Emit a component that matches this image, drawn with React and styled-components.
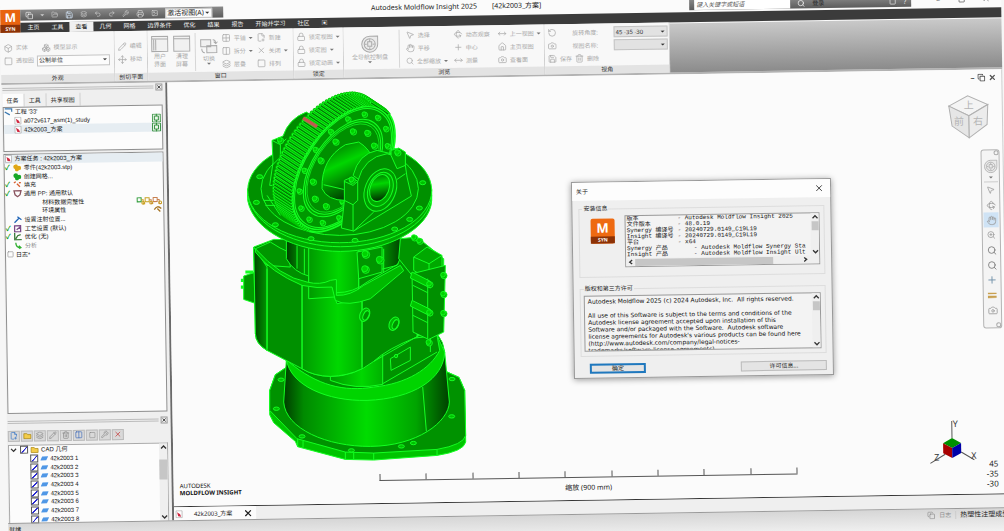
import React from "react";
import styled, { createGlobalStyle } from "styled-components";
import {
  Box,
  Boxes,
  Camera,
  Columns2,
  Copy,
  FilePlus2,
  FolderOpen,
  Grid2x2,
  Hand,
  House,
  Image,
  Layers,
  Lock,
  MousePointer2,
  Move,
  MoveHorizontal,
  Pencil,
  Plus,
  Printer,
  Redo2,
  RotateCcw,
  Rotate3d,
  Save,
  Search,
  Square,
  Trash2,
  Undo2,
  Wrench,
  X,
  ZoomIn,
} from "lucide-react";

const GlobalStyle = createGlobalStyle`
  * {
    box-sizing: border-box;
  }

  html,
  body {
    margin: 0;
    height: 100%;
    overflow: hidden;
    background: #f6f6f6;
  }

  button,
  input,
  select {
    font: inherit;
    color: inherit;
    margin: 0;
    padding: 0;
  }
`;

/* the whole window is tilted a little */
const Window = styled.div`
  display: flex;
  flex-direction: column;
  width: calc(100% - 3px);
  height: calc(100vh + 16px);
  background: #fbfbfb;
  color: #222;
  font-family: "Noto Sans", "Noto Sans CJK SC", sans-serif;
  font-size: 6px;
  line-height: 8px;
  transform: rotate(-0.9deg);
  transform-origin: 0 0;
`;

const Header = styled.header`
  display: flex;
  align-items: flex-end;
  flex: none;
  height: 33px;
`;

const AppButton = styled.button`
  display: flex;
  flex-direction: column;
  width: 20px;
  height: 23px;
  border: 0;
  background: #e8630f;
  color: #fff;
  font-size: 12px;
  font-weight: 700;
  line-height: 15px;
  text-align: center;
`;

const AppButtonLetter = styled.span`
  width: 100%;
`;

const AppButtonTag = styled.span`
  width: 100%;
  background: #8c3206;
  font-size: 5px;
  line-height: 8px;
`;

const HeaderRows = styled.div`
  flex: 1;
  min-width: 0;
`;

const TitleRow = styled.div`
  display: flex;
  align-items: flex-start;
  height: 13px;
`;

const Toolbar = styled.div`
  display: flex;
  align-items: center;
  gap: 7px;
  width: ${(props) => props.$width}px;
  height: 11px;
  padding: 0 5px;
  background: linear-gradient(#8a8a8a, #5c5c5c);
  color: #d5d5d5;
`;

const ToolButton = styled.button`
  display: flex;
  align-items: center;
  justify-content: center;
  border: 0;
  background: none;
  color: ${(props) => props.$color || "inherit"};
`;

const ViewSelect = styled.select`
  appearance: none;
  flex: 1;
  min-width: 0;
  height: 9px;
  padding: 0 1px;
  border: 0;
  background: none;
  color: #222;
`;

const Title = styled.h1`
  flex: 1;
  display: flex;
  justify-content: center;
  gap: 15px;
  margin: 0;
  font-size: 7px;
  font-weight: 400;
  line-height: 8px;
`;

const SearchInput = styled.input`
  width: 96px;
  height: 10px;
  border: 0;
  padding: 0 2px;
  background: #fff;
  font-style: italic;

  &::placeholder {
    color: #555;
  }
`;

const WindowButtons = styled.div`
  display: flex;
  justify-content: space-between;
  width: 90px;
  padding: 0 11px 0 25px;
  font-size: 8px;
`;

const TabRow = styled.nav`
  display: flex;
  align-items: center;
  height: 10px;
  padding-left: 1px;
  background: #3b3b3b;
`;

const RibbonTab = styled.button`
  height: 10px;
  padding: 0 6px;
  border: 0;
  background: ${(props) => (props.$active ? "#f0f0f0" : "none")};
  color: ${(props) => (props.$active ? "#222" : "#f4f4f4")};
  line-height: 9px;
  white-space: nowrap;
`;

const Ribbon = styled.section`
  display: flex;
  flex: none;
  height: 52px;
  border-bottom: 2px solid #b2b2b2;
`;

const Group = styled.div`
  display: flex;
  flex-direction: column;
  flex: none;
  width: ${(props) => props.$width}px;
  border-right: 1px solid #cfcfcf;
`;

const GroupBody = styled.div`
  display: flex;
  align-items: center;
  gap: ${(props) => props.$gap || 4}px;
  height: 42px;
  padding: 1px 3px 0;
  color: #aaa;
  background: #f8f8f8;
`;

const GroupTitle = styled.div`
  height: 8px;
  background: #e3e3e3;
  color: #333;
  line-height: 9px;
  text-align: center;
`;

const RibbonEmpty = styled.div`
  flex: 1;
  margin-top: 1px;
  background: linear-gradient(#c9c9c9, #8b8b8b);
`;

const Column = styled.div`
  display: flex;
  flex-direction: column;
  width: ${(props) => (props.$width ? `${props.$width}px` : "auto")};
`;

const Line = styled.div`
  display: flex;
  align-items: center;
  gap: 3px;
  height: 13px;
`;

const Command = styled.button`
  display: flex;
  align-items: center;
  gap: 3px;
  height: 13px;
  border: 0;
  background: none;
  white-space: nowrap;
`;

const BigCommand = styled.button`
  display: flex;
  flex-direction: column;
  align-items: center;
  width: ${(props) => props.$width || 18}px;
  border: 0;
  background: none;
  white-space: pre-line;
`;

const Separator = styled.span`
  width: 1px;
  height: 38px;
  background: #d6d6d6;
`;

const Arrow = styled.span`
  width: 0;
  height: 0;
  border: 2px solid transparent;
  border-top-color: ${(props) => props.$color || "#777"};
  border-bottom: 0;
`;

const SelectBox = styled.span`
  display: flex;
  align-items: center;
  width: ${(props) => props.$width}px;
  height: ${(props) => props.$height || 11}px;
  padding-right: 2px;
  border: 1px solid #c4c4c4;
  background: ${(props) => props.$background || "#fcfcfc"};
  font-size: ${(props) => props.$size || 6}px;
`;

const PlainSelect = styled.select`
  appearance: none;
  flex: 1;
  min-width: 0;
  height: 9px;
  padding: 0 1px;
  border: 0;
  background: none;
  color: #333;
`;

const FieldLabel = styled.label`
  width: 51px;
  text-align: center;
`;

const Main = styled.main`
  display: flex;
  flex: 1;
  min-height: 0;
`;

const Dock = styled.aside`
  display: flex;
  flex-direction: column;
  flex: none;
  width: 166px;
  padding: 0 3px 0 1px;
  border-right: 2px solid #6a6a6a;
  background: #efefef;
`;

const Gripper = styled.div`
  display: flex;
  align-items: center;
  gap: 2px;
  flex: none;
  height: 9px;
`;

const GripperBar = styled.span`
  flex: 1;
  height: 3px;
  border-top: 1px solid #bcbcbc;
  border-bottom: 1px solid #bcbcbc;
`;

const CloseButton = styled.button`
  display: flex;
  border: 1px solid #999;
  background: #eee;
`;

const DockTabs = styled.div`
  display: flex;
  flex: none;
  height: 13px;
`;

const DockTab = styled.button`
  padding: 0 5px 0 4px;
  border: 0;
  border-right: 1px solid #d0d0d0;
  background: ${(props) => (props.$active ? "#fcfcfc" : "none")};
`;

const TreeBox = styled.div`
  flex: none;
  height: 45px;
  margin-bottom: 2px;
  border: 1px solid #8e8e8e;
  background: #fcfcfc;
`;

const TaskBox = styled.div`
  flex: 1;
  margin-bottom: 4px;
  border: 1px solid #8e8e8e;
  background: #fcfcfc;
`;

const TreeList = styled.ul`
  display: grid;
  grid-auto-rows: 1fr;
  height: ${(props) => props.$height}px;
  margin: 0;
  padding: 0;
  list-style: none;
  font-family: "Liberation Sans", "Noto Sans CJK SC", sans-serif;
  color: #111;
`;

const TreeRow = styled.li`
  display: flex;
  align-items: center;
  gap: 2px;
  padding: 0 1px 0 ${(props) => props.$indent || 0}px;
  background: ${(props) => (props.$selected ? "#e6edf2" : "none")};
  color: ${(props) => (props.$muted ? "#888" : "inherit")};
  white-space: pre;
`;

const Tick = styled.span`
  width: 6px;
  color: #0a9a1a;
  font-size: 7px;
  font-weight: 700;
`;

const Spacer = styled.span`
  flex: 1;
`;

const LayerTools = styled.div`
  display: flex;
  align-items: center;
  gap: 1px;
  flex: none;
  height: 18px;
`;

const LayerTool = styled.button`
  display: flex;
  align-items: center;
  justify-content: center;
  width: 12px;
  height: 11px;
  border: 1px solid #bbb;
  background: #d9d9d9;
  color: ${(props) => props.$color || "#888"};
`;

const LayerBox = styled.div`
  display: flex;
  flex: none;
  height: 78px;
  border: 1px solid #aaa;
  border-bottom: 0;
  background: #fcfcfc;
`;

const LayerList = styled(TreeList)`
  flex: 1;
`;

const Check = styled.input`
  appearance: none;
  flex: none;
  width: 8px;
  height: 8px;
  border: 1px solid #555;
  background: #fff;

  &:checked {
    background: linear-gradient(135deg, #fff 44%, #2a2ad0 45%, #2a2ad0 60%, #fff 61%);
  }
`;

const LayerLabel = styled.label`
  display: flex;
  align-items: center;
  gap: 2px;
`;

const Scroll = styled.div`
  display: flex;
  flex-direction: ${(props) => (props.$horizontal ? "row" : "column")};
  align-items: center;
  flex: none;
  width: ${(props) => (props.$horizontal ? "auto" : "8px")};
  height: ${(props) => (props.$horizontal ? "8px" : "auto")};
  background: #efefef;
`;

const Thumb = styled.span`
  width: ${(props) => props.$width}px;
  height: ${(props) => props.$height}px;
  background: #c6c6c6;
`;

const Work = styled.div`
  display: flex;
  flex-direction: column;
  flex: 1;
  min-width: 0;
`;

const Viewport = styled.div`
  position: relative;
  flex: 1;
  background: #fbfbfb;
  border-right: 1px solid #ccc;
`;

const ModelPlace = styled.div`
  position: absolute;
  left: 63px;
  top: 4px;
`;

const MdiButtons = styled.div`
  position: absolute;
  right: 5px;
  top: 4px;
  display: flex;
  gap: 3px;
  color: #555;
  font-size: 8px;
  font-weight: 700;
`;

const CubePlace = styled.div`
  position: absolute;
  right: 12px;
  top: 25px;
`;

const NavBar = styled.div`
  position: absolute;
  right: 3px;
  top: 80px;
  display: flex;
  flex-direction: column;
  align-items: center;
  width: 19px;
  height: 179px;
  border: 1px solid #b4b4b4;
  border-radius: 3px;
  background: #f4f4f4;
  color: #999;
`;

const NavDot = styled.span`
  align-self: flex-end;
  width: 5px;
  height: 5px;
  border: 1px solid #aaa;
  border-radius: 50%;
`;

const NavWheel = styled.button`
  display: flex;
  flex-direction: column;
  align-items: center;
  gap: 3px;
  height: 27px;
  padding-top: 4px;
  border: 0;
  border-bottom: 1px solid #ccc;
  background: none;
`;

const NavButton = styled.button`
  display: flex;
  align-items: center;
  justify-content: center;
  width: 15px;
  height: 15px;
  border: 0;
  background: ${(props) => (props.$active ? "#cfe3f5" : "none")};
  color: ${(props) => props.$color || "#999"};
`;

const Brand = styled.div`
  position: absolute;
  left: 6px;
  bottom: 9px;
  color: #111;
  line-height: 7px;
`;

const BrandName = styled.div`
  font-weight: 700;
`;

const RulerPlace = styled.div`
  position: absolute;
  left: 206px;
  bottom: 8px;
  width: 418px;
  font-size: 7px;
  line-height: 9px;
  text-align: center;
`;

const RulerBar = styled.div`
  display: flex;
  height: 7px;
  margin-bottom: 5px;
  border-bottom: 1px solid #555;
  border-left: 1px solid #555;
`;

const RulerStep = styled.span`
  flex: 1;
  border-right: 1px solid #555;
`;

const AxesPlace = styled.div`
  position: absolute;
  right: 27px;
  bottom: 28px;
`;

const Angles = styled.div`
  position: absolute;
  right: 9px;
  bottom: 5px;
  font-size: 8px;
  line-height: 10px;
  text-align: right;
`;

const DocTabs = styled.div`
  display: flex;
  flex: none;
  height: 14px;
  border-top: 1px solid #333;
  background: #efefef;
`;

const DocTab = styled.button`
  display: flex;
  align-items: center;
  justify-content: space-between;
  width: 82px;
  border: 0;
  padding: 0 3px 0 1px;
  background: #fcfcfc;
  white-space: nowrap;
`;

const StatusBar = styled.footer`
  display: flex;
  align-items: flex-start;
  justify-content: space-between;
  flex: none;
  height: 24px;
  padding: 2px 0 0 1px;
  border-top: 1px solid #999;
  background: linear-gradient(#d6d6d6, #f2f2f2);
`;

const StatusRight = styled.div`
  display: flex;
  align-items: center;
  gap: 4px;
  color: #888;
  white-space: nowrap;
`;

const StatusMode = styled.span`
  padding-left: 4px;
  border-left: 1px solid #ccc;
  color: #222;
  font-size: 7px;
`;

const Dialog = styled.div`
  position: absolute;
  left: 402px;
  top: 106px;
  width: 260px;
  border: 1px solid #999;
  background: #efefef;
  box-shadow: 0 1px 6px rgba(0, 0, 0, 0.4);
`;

const DialogBar = styled.div`
  display: flex;
  align-items: center;
  justify-content: space-between;
  height: 18px;
  padding: 0 6px 0 4px;
  background: #fdfdfd;
`;

const DialogTitle = styled.h2`
  margin: 0;
  font-size: 6px;
  font-weight: 400;
`;

const DialogBody = styled.div`
  display: flex;
  flex-direction: column;
  gap: 7px;
  padding: 4px 6px 4px;
`;

const Fieldset = styled.fieldset`
  display: flex;
  gap: 10px;
  min-width: 0;
  height: ${(props) => props.$height}px;
  margin: 0;
  padding: 3px 4px 0 3px;
  border: 1px solid #ddd;
`;

const Legend = styled.legend`
  padding: 0 1px;
  line-height: 8px;
`;

const ProductLogo = styled.div`
  width: 24px;
  height: 25px;
  margin: 3px 0 0 8px;
  border-radius: 2px;
  background: #ee6a12;
  color: #fff;
  font-size: 13px;
  font-weight: 700;
  line-height: 18px;
  text-align: center;
`;

const ProductTag = styled.div`
  background: #8c3206;
  font-size: 5px;
  line-height: 7px;
`;

const InfoBox = styled.div`
  display: flex;
  flex-direction: column;
  flex: 1;
  min-width: 0;
  height: ${(props) => props.$height}px;
  border: 1px solid #999;
  background: #f3f3f3;
`;

const InfoTop = styled.div`
  display: flex;
  flex: 1;
  min-height: 0;
`;

const VersionRows = styled.dl`
  flex: 1;
  min-width: 0;
  margin: 0;
  overflow: hidden;
  font-family: "Liberation Mono", "Noto Sans CJK SC", monospace;
  line-height: 6px;
  color: #111;
`;

const VersionRow = styled.div`
  display: flex;
  height: 6px;
  white-space: nowrap;
`;

const VersionName = styled.dt`
  flex: none;
  width: ${(props) => (props.$wide ? 68 : 52)}px;
  padding-left: 1px;
`;

const VersionValue = styled.dd`
  margin: 0;
`;

const LicenseText = styled.div`
  flex: 1;
  min-width: 0;
  overflow: hidden;
  padding: 1px 3px;
  color: #111;
  font-family: "DejaVu Sans", sans-serif;
  line-height: 7px;
  white-space: pre;
`;

const DialogButtons = styled.div`
  display: flex;
  align-items: center;
  justify-content: space-between;
  padding: 0 0 0 9px;
`;

const DialogButton = styled.button`
  width: ${(props) => props.$width}px;
  height: 10px;
  border: ${(props) => (props.$primary ? "2px solid #1f78be" : "1px solid #bbb")};
  background: #e4e4e4;
  line-height: 6px;
`;

const edge = "#14ff22";

// gear in front view: one ellipse, swept back to the upper left
const gear = { cx: 338, cy: 248, a: 214, b: 118, tilt: (-56 * Math.PI) / 180 };
const sweep = { x: -52, y: -34 };

function gearPoint(t, k = 1) {
  const px = gear.a * k * Math.cos(t);
  const py = gear.b * k * Math.sin(t);
  return [
    gear.cx + px * Math.cos(gear.tilt) - py * Math.sin(gear.tilt),
    gear.cy + px * Math.sin(gear.tilt) + py * Math.cos(gear.tilt),
  ];
}

const teeth = Array.from({ length: 60 }, (_, i) => gearPoint(Math.PI * 0.96 + (i / 59) * Math.PI * 1.1));
const rimBolts = Array.from({ length: 16 }, (_, i) => gearPoint((i / 16) * Math.PI * 2, 0.86));
const hubBolts = Array.from({ length: 11 }, (_, i) => gearPoint((i / 11) * Math.PI * 2, 0.6));

function GearRing({ k, fill = "none", width = 3 }) {
  return (
    <ellipse
      cx={gear.cx}
      cy={gear.cy}
      rx={gear.a * k}
      ry={gear.b * k}
      fill={fill}
      stroke={edge}
      strokeWidth={width}
      transform={`rotate(-56 ${gear.cx} ${gear.cy})`}
    />
  );
}

function Bolt({ x, y, r = 8 }) {
  return (
    <g stroke={edge} strokeWidth="2.5">
      <circle cx={x + 3} cy={y + 3} r={r} fill="#00b400" />
      <circle cx={x} cy={y} r={r - 2} fill="#00d200" />
    </g>
  );
}

function Model() {
  return (
    <svg width="250" height="390" viewBox="0 0 750 1170" overflow="visible" role="img" aria-label="42k2003">
      <defs>
        <linearGradient id="cone">
          <stop offset="0" stopColor="#003c00" />
          <stop offset="0.12" stopColor="#008a00" />
          <stop offset="0.5" stopColor="#00dc00" />
          <stop offset="0.8" stopColor="#00a400" />
          <stop offset="1" stopColor="#004000" />
        </linearGradient>
        <linearGradient id="mid">
          <stop offset="0" stopColor="#009a00" />
          <stop offset="0.6" stopColor="#00d800" />
          <stop offset="1" stopColor="#00b000" />
        </linearGradient>
        <linearGradient id="side">
          <stop offset="0" stopColor="#004400" />
          <stop offset="1" stopColor="#009400" />
        </linearGradient>
        <linearGradient id="hub" x1="0" y1="0" x2="0.4" y2="1">
          <stop offset="0" stopColor="#006000" />
          <stop offset="0.45" stopColor="#00d600" />
          <stop offset="1" stopColor="#003a00" />
        </linearGradient>
      </defs>
      <g transform="rotate(0.9)" strokeLinejoin="round" stroke={edge} strokeWidth="3">
        {/* base plate */}
        <path d="M165 848 L135 868 L118 915 L118 988 L130 1012 L195 1068 L202 1084 L345 1122 L430 1124 L620 1110 Q700 1098 706 1070 L703 915 L686 876 L640 855Z" fill="#00c400" />
        <path d="M165 848 L135 868 L118 915 L118 975 L200 1060 L345 1100 L430 1103 L620 1092 Q700 1078 706 1050 L703 915 L686 876 L640 855Z" fill="#009200" />
        <path d="M345 1100 V1122 M430 1103 V1124 M202 1060 V1084 M370 1102 V1123 M620 1092 V1110 M218 1066 V1086" fill="none" />
        {[[152, 883], [138, 970], [215, 1053], [363, 1095], [513, 1083], [549, 1073], [664, 993], [665, 881]].map(([x, y]) => (
          <ellipse key={`${x}-${y}`} cx={x} cy={y} rx="9" ry="5" fill="#00c000" />
        ))}
        {/* cone */}
        <path d="M168 822 L160 950 C165 1030 290 1084 420 1083 C560 1082 655 1010 657 950 L643 800 Q640 770 620 745 L180 780Z" fill="url(#cone)" />
        <path d="M168 822 C180 900 290 948 410 945 C550 940 640 880 643 800 L620 750 L200 800Z" fill="#00d400" />
        <path d="M176 830 C260 900 340 920 430 905 C530 895 600 850 628 795 L620 750 L200 800Z" fill="#009200" />
        <path d="M300 830 V885 Q375 915 457 897 V800Z" fill="url(#mid)" />
        <path d="M480 820 L540 785 V825 L482 855Z" fill="#009200" />
        <circle cx="497" cy="812" r="5" fill="#00c000" />
        <path d="M577 905 L588 1038 M600 740 V800 M457 895 L620 800" fill="none" />
        {/* left stub */}
        <path d="M75 560 L40 572 V642 L78 655Z" fill="#009a00" />
        <path d="M45 560 h24 M36 580 v10 M36 600 v10" fill="none" strokeWidth="9" />
        {/* housing */}
        <path d="M70 485 L130 462 L560 470 L560 755 Q470 790 430 828 Q370 874 300 873 Q250 872 215 850 L110 795 Q76 775 75 745Z" fill="#009000" />
        <path d="M70 485 L75 745 Q76 775 110 795 V545Z" fill="url(#side)" />
        <path d="M215 595 V850 Q250 872 300 873 Q350 872 395 850 V640 L320 655 L300 600Z" fill="url(#mid)" />
        <path d="M110 790 V550 M215 850 V590 M395 846 V640 M430 828 L575 745" fill="none" />
        <path d="M120 470 Q150 490 175 500 L180 545 L110 540 L75 490Z" fill="#009600" />
        {/* neck */}
        <path d="M168 455 V520 Q190 560 235 572 V590 Q260 600 300 590 L500 540 Q520 510 510 440Z" fill="url(#cone)" />
        <path d="M235 480 V640 L385 630 V480Z" fill="url(#mid)" />
        <path d="M200 480 V550 M222 490 V565 M385 490 V630 M460 490 V560" fill="none" />
        <path d="M380 500 L455 485 V560 L385 580Z" fill="#009600" />
        {/* folded lip */}
        <path d="M75 490 Q150 575 230 590 Q270 600 300 585 L318 582 V630 Q360 632 400 600 L510 540 L520 556 L420 640 Q350 665 315 645 L305 605 Q260 610 215 600 Q120 560 75 500Z" fill="#00b800" />
        <path d="M318 622 Q370 622 410 590 L505 535" fill="none" />
        {[[404, 505], [447, 522], [403, 550]].map(([x, y]) => (
          <Bolt key={`${x}-${y}`} x={x} y={y} r={11} />
        ))}
        <ellipse cx="403" cy="688" rx="14" ry="21" fill="#00b400" transform="rotate(25 403 688)" />
        <ellipse cx="407" cy="690" rx="8" ry="15" fill="#009200" transform="rotate(25 407 690)" />
        <ellipse cx="491" cy="715" rx="14" ry="21" fill="#00b400" transform="rotate(25 491 715)" />
        <ellipse cx="495" cy="717" rx="8" ry="15" fill="#009200" transform="rotate(25 495 717)" />
        {/* right bracket */}
        <path d="M510 460 L560 455 L640 520 V590 L545 570 L505 520Z" fill="#009600" />
        <path d="M550 515 L590 485 L635 510 V560 L590 580 L550 555Z" fill="#00a800" />
        <path d="M550 515 L596 535 L635 510 M596 535 V580" fill="none" />
        <path d="M545 565 L645 540 L640 740 L595 762 L548 740Z" fill="#009000" />
        <path d="M592 580 V760 M548 600 L592 622 M548 690 L592 712" fill="none" />
        <path d="M545 560 L600 588 V608 L540 578Z M545 645 L600 672 V692 L540 662Z" fill="#00c400" />
        {[[596, 595], [596, 680], [638, 568], [638, 625], [638, 682], [594, 770], [550, 455], [566, 465]].map(([x, y]) => (
          <Bolt key={`${x}-${y}`} x={x} y={y} r={9} />
        ))}
        {/* flange */}
        <path d="M52 310 V345 C70 440 200 498 330 498 C470 498 600 430 604 345 V310Z" fill="#00a800" />
        <path d="M52 330 C70 425 200 484 330 484 C470 484 600 420 604 330" fill="none" />
        <ellipse cx="328" cy="315" rx="276" ry="157" fill="#009000" />
        <ellipse cx="328" cy="310" rx="236" ry="140" fill="#009600" />
        {[[88, 274], [78, 351], [135, 418], [242, 460], [374, 465], [493, 431], [567, 368], [577, 292], [538, 402]].map(([x, y]) => (
          <ellipse key={`${x}-${y}`} cx={x} cy={y} rx="9" ry="6" fill="#00c000" />
        ))}
        {/* rear bearing */}
        <path d="M125 165 L158 152 Q175 100 228 80 L260 100 L250 300 L118 300 L128 230Z" fill="#008c00" />
        <path d="M125 165 L150 178 L168 160 M150 178 V215 L125 240 M110 330 L150 390 M100 345 h40 M105 360 h40" fill="none" />
        <Bolt x={148} y={163} r={9} />
        {/* gear */}
        <g transform={`translate(${sweep.x} ${sweep.y})`}>
          <GearRing k={1} fill="#00c000" />
        </g>
        <GearRing k={1.01} fill="#00b400" width={5} />
        {teeth.map(([x, y], i) => (
          <g key={i}>
            <line x1={x} y1={y} x2={x + sweep.x} y2={y + sweep.y} stroke="#00c400" strokeWidth="13" strokeLinecap="round" />
            <line x1={x} y1={y} x2={x + sweep.x} y2={y + sweep.y} strokeWidth="8" strokeLinecap="round" />
            <line x1={x} y1={y} x2={x + sweep.x} y2={y + sweep.y} stroke="#007c00" strokeWidth="4" />
          </g>
        ))}
        <path d="M218 98 L260 124" stroke="#c05a50" strokeWidth="11" />
        <GearRing k={0.97} fill="#009800" width={4} />
        <GearRing k={0.94} />
        {rimBolts.map(([x, y], i) => (
          <Bolt key={i} x={x} y={y} />
        ))}
        <GearRing k={0.77} fill="#00a600" />
        <GearRing k={0.73} fill="#009000" />
        <GearRing k={0.7} width={2} />
        {hubBolts.map(([x, y], i) => (
          <Bolt key={i} x={x} y={y} r={9} />
        ))}
        {/* hub */}
        <path d="M275 310 Q272 220 345 178 L385 170 Q420 190 430 230 L345 345 Q290 345 275 310Z" fill="url(#hub)" />
        <path d="M280 298 L340 312" fill="none" />
        {/* front bearing block */}
        <path d="M368 270 Q385 205 440 195 L482 205 L525 215 V260 L450 330Z" fill="#00a000" />
        <path d="M342 285 L365 275 L382 288 Q400 215 470 205 Q515 215 525 240 L530 275 L543 332 L370 437 L333 428 L342 345Z" fill="#009000" />
        <path d="M342 345 L368 358 L382 345 V288 M368 358 V437 M342 288 L368 300 L382 288 M525 265 L500 282 M370 437 L430 380" fill="none" />
        <path d="M482 195 L505 188 L525 200 V240 L500 250 L482 210Z" fill="#00a400" />
        <ellipse cx="450" cy="314" rx="46" ry="66" fill="#009a00" transform="rotate(22 450 314)" />
        <ellipse cx="450" cy="312" rx="36" ry="53" fill="#00a800" transform="rotate(22 450 312)" />
        <ellipse cx="448" cy="308" rx="28" ry="42" fill="url(#hub)" transform="rotate(22 448 308)" />
        <Bolt x={363} y={282} r={9} />
        <Bolt x={500} y={200} r={9} />
      </g>
    </svg>
  );
}

function ViewCube() {
  return (
    <svg width="42" height="44" viewBox="0 0 42 44" stroke="#b0b0b0" fontSize="10" fill="#eee">
      <path d="M1 11 L20 1 L40 10 L21 21Z" fill="#f4f4f4" />
      <path d="M1 11 L21 21 V43 L4 31Z" fill="#e6e6e6" />
      <path d="M40 10 L21 21 V43 L39 30Z" fill="#ececec" />
      <g stroke="none" fill="#b4b4b4">
        <text x="6" y="30">前</text>
        <text x="25" y="30">右</text>
        <text x="16" y="14">上</text>
      </g>
    </svg>
  );
}

function Axes() {
  return (
    <svg width="52" height="46" viewBox="0 0 52 46" stroke="#555" fontSize="9">
      <path d="M24 20 V3 M17 36 L2 45 M33 34 L46 42" fill="none" />
      <g stroke="none">
        <path d="M15 25 L24 20 L33 25 L24 30Z" fill="#009000" />
        <path d="M15 25 L24 30 V40 L15 35Z" fill="#a80000" />
        <path d="M24 30 L33 25 V35 L24 40Z" fill="#0000a8" />
        <g fill="#333">
          <text x="25" y="9">Y</text>
          <text x="6" y="42">Z</text>
          <text x="43" y="41">X</text>
        </g>
      </g>
    </svg>
  );
}

function WheelIcon({ size }) {
  return (
    <svg width={size} height={size} viewBox="0 0 18 18" fill="#eaeaea" stroke="#aaa">
      <path d="M9 1 H17 V9 A8 8 0 1 1 9 1Z" />
      <circle cx="9" cy="9" r="5.5" fill="none" />
      <path d="M7 6.5 H11 V11 H7Z M9 4 V6 M9 12 V14 M4 9 H6 M12 9 H14" fill="none" />
    </svg>
  );
}

function WindowIcon({ sidebar }) {
  return (
    <svg width="18" height="17" viewBox="0 0 18 17" fill="#f1f1f1" stroke="#aaa">
      <path d="M1 1 H17 V16 H1Z M1 3.5 H17" />
      {sidebar && <path d="M3 4 V15 M5 4 V15" />}
    </svg>
  );
}

function SwitchIcon() {
  return (
    <svg width="18" height="17" viewBox="0 0 18 17" fill="#f1f1f1" stroke="#aaa">
      <path d="M1 2 H11 V9 H1Z M7 8 H17 V15 H7Z" />
      <path d="M13 2 Q16 2 16 6 M14 4 L16 6 L18 4 M2 11 Q2 15 5 15" fill="none" />
    </svg>
  );
}

function StudyIcon() {
  return (
    <svg width="8" height="8" viewBox="0 0 8 8">
      <path d="M1 0.5 H7 V7.5 H1Z" fill="#fff" stroke="#999" strokeWidth="0.6" />
      <path d="M2 2 L5 4 L6 6.5 L3 6Z" fill="#d02840" />
    </svg>
  );
}

function FolderIcon() {
  return (
    <svg width="9" height="8" viewBox="0 0 9 8">
      <path d="M1 2 H4 L5 3 H8 V7 H1Z" fill="#f3cc4a" stroke="#a88410" strokeWidth="0.7" />
    </svg>
  );
}

function BlobIcon({ color }) {
  return (
    <svg width="9" height="8" viewBox="0 0 9 8" fill={color}>
      <circle cx="3" cy="3" r="2.4" />
      <circle cx="6.3" cy="4.2" r="2.2" />
      <circle cx="4.2" cy="5.8" r="2" />
    </svg>
  );
}

function LineIcon({ color, d }) {
  return (
    <svg width="9" height="8" viewBox="0 0 9 8" fill="none" stroke={color} strokeWidth="1.3">
      <path d={d} />
    </svg>
  );
}

function MeshBadge() {
  return (
    <svg width="9" height="9" viewBox="0 0 9 9" fill="#e9f5e9" stroke="#2a8a35" strokeWidth="0.9">
      <path d="M0.5 0.5 H8.5 V8.5 H0.5Z M2.5 2.5 H6.5 V6.5 H2.5Z M4.5 0 V2.5 M4.5 6.5 V9" />
    </svg>
  );
}

function ChainIcon() {
  return (
    <svg width="26" height="8" viewBox="0 0 26 8" fill="none" strokeWidth="1">
      <path d="M1 1 H5 V5 H1Z" stroke="#2a9a35" />
      <path d="M9 1 H13 V5 H9Z M5 3 H7 V7 H9" stroke="#c8a020" />
      <path d="M17 1 H21 V5 H17Z M13 3 H15 V7 H17 M21 3 H23 V7 H25" stroke="#c88050" />
      <circle cx="7" cy="6" r="1.4" stroke="#c8a020" />
      <circle cx="15" cy="6" r="1.4" stroke="#c8a020" />
      <circle cx="24" cy="6" r="1.4" stroke="#c8a020" />
    </svg>
  );
}

function LayerIcon() {
  return (
    <svg width="8" height="6" viewBox="0 0 8 6">
      <path d="M2 1 H8 L6 5 H0Z" fill="#4f97e6" />
    </svg>
  );
}

const ribbonTabs = ["主页", "工具", "查看", "几何", "网格", "边界条件", "优化", "结果", "报告", "开始并学习", "社区"];

const tasks = [
  { label: "零件(42k2003.stp)", tick: true, icon: <BlobIcon color="#e0a818" /> },
  { label: "创建网格...", icon: <BlobIcon color="#18a828" /> },
  { label: "填充", tick: true, icon: <LineIcon color="#d86030" d="M1 2 L3 1 M4 3 L7 6 M6 2 H8" /> },
  { label: "通用 PP: 通用默认", tick: true, icon: <LineIcon color="#8a5560" d="M1 1 H8 L7 5 L4.5 7 L2 5Z" /> },
  { label: "材料数据完整性", indent: 37, badge: <ChainIcon /> },
  { label: "环境属性", indent: 37, badge: <LineIcon color="#a8782a" d="M1 5 Q4 0 8 4 M4 4 L7 7" /> },
  { label: "设置注射位置...", icon: <LineIcon color="#2468b8" d="M1 7 L6 2 M4 1 L8 4" /> },
  { label: "工艺设置 (默认)", tick: true, icon: <LineIcon color="#7a4a88" d="M1 1 H7 V7 H1Z M3 5 L7 2" /> },
  { label: "优化 (无)", tick: true, icon: <LineIcon color="#3a7a3a" d="M1 0 V7 H8 M2 6 L4 3 L7 2" /> },
  { label: "分析", muted: true, icon: <LineIcon color="#30b030" d="M2 1 Q2 6 7 6 M5 4 L7 6 L5 7" /> },
];

const versions = [
  ["版本", "Autodesk Moldflow Insight 2025"],
  ["文件版本", "48.0.19"],
  ["Synergy 编译号", "20240729.0149_C19L19"],
  ["Insight 编译号", "20240729.0149_C19L19"],
  ["平台", "x64"],
  ["Synergy 产品", "Autodesk Moldflow Synergy Sta", true],
  ["Insight 产品", "Autodesk Moldflow Insight Ult", true],
];

const license = `Autodesk Moldflow 2025 (c) 2024 Autodesk, Inc.  All rights reserved.

All use of this Software is subject to the terms and conditions of the
Autodesk license agreement accepted upon installation of this
Software and/or packaged with the Software.  Autodesk software
license agreements for Autodesk's various products can be found here
(http://www.autodesk.com/company/legal-notices-
trademarks/software-license-agreements).`;

function Cmd({ icon: Icon, children, arrow }) {
  return (
    <Command>
      <Icon size={9} strokeWidth={2} />
      {children}
      {arrow && <Arrow />}
    </Command>
  );
}

function TopBar() {
  return (
    <Header>
      <AppButton>
        <AppButtonLetter>M</AppButtonLetter>
        <AppButtonTag>SYN</AppButtonTag>
      </AppButton>
      <HeaderRows>
        <TitleRow>
          <Toolbar $width={203}>
            <ToolButton aria-label="新建" $color="#fff"><Copy size={8} /></ToolButton>
            <Arrow $color="#ccc" />
            <ToolButton aria-label="打开"><FolderOpen size={7} /></ToolButton>
            <ToolButton aria-label="保存" $color="#d8ecff"><Save size={8} /></ToolButton>
            <ToolButton aria-label="导出"><Layers size={7} /></ToolButton>
            <ToolButton aria-label="撤消"><Undo2 size={7} /></ToolButton>
            <ToolButton aria-label="重做"><Redo2 size={7} /></ToolButton>
            <ToolButton aria-label="设置"><Wrench size={7} /></ToolButton>
            <ToolButton aria-label="打印"><Printer size={8} /></ToolButton>
            <ToolButton aria-label="视图"><Image size={7} /></ToolButton>
            <SelectBox $width={47} $height={10} $size={7}>
              <ViewSelect aria-label="激活视图">
                <option>激活视图(A)</option>
              </ViewSelect>
              <Arrow $color="#333" />
            </SelectBox>
          </Toolbar>
          <Title>
            <span>Autodesk Moldflow Insight 2025</span>
            <span>[42k2003_方案]</span>
          </Title>
          <Toolbar $width={222}>
            <SearchInput aria-label="搜索" placeholder="键入关键字或短语" />
            <ToolButton aria-label="查找" $color="#fff"><Search size={8} /></ToolButton>
            <ToolButton $color="#222">登录</ToolButton>
            <Spacer />
            <ToolButton aria-label="商店" $color="#fff"><Square size={7} /></ToolButton>
            <ToolButton aria-label="帮助" $color="#fff">?</ToolButton>
          </Toolbar>
          <WindowButtons>
            <ToolButton aria-label="最小化">–</ToolButton>
            <ToolButton aria-label="最大化"><Square size={7} /></ToolButton>
            <ToolButton aria-label="关闭"><X size={8} /></ToolButton>
          </WindowButtons>
        </TitleRow>
        <TabRow>
          {ribbonTabs.map((tab) => (
            <RibbonTab key={tab} $active={tab === "查看"}>
              {tab}
            </RibbonTab>
          ))}
          <RibbonTab aria-label="显示">▣</RibbonTab>
        </TabRow>
      </HeaderRows>
    </Header>
  );
}

function RibbonBar() {
  return (
    <Ribbon>
      <Group $width={114}>
        <GroupBody>
          <Column>
            <Line>
              <Cmd icon={Box}>实体</Cmd>
              <Spacer />
              <Cmd icon={Boxes}>模型显示</Cmd>
              <Spacer />
              <Spacer />
              <Spacer />
            </Line>
            <Line>
              <Cmd icon={Square}>透视图</Cmd>
              <SelectBox $width={73}>
                <PlainSelect aria-label="单位">
                  <option>公制单位</option>
                </PlainSelect>
                <Arrow $color="#333" />
              </SelectBox>
            </Line>
          </Column>
        </GroupBody>
        <GroupTitle>外观</GroupTitle>
      </Group>
      <Group $width={33}>
        <GroupBody>
          <Column>
            <Cmd icon={Pencil}>编辑</Cmd>
            <Cmd icon={Move}>移动</Cmd>
          </Column>
        </GroupBody>
        <GroupTitle>剖切平面</GroupTitle>
      </Group>
      <Group $width={146}>
        <GroupBody>
          <BigCommand>
            <WindowIcon sidebar />
            {"用户\n界面"}
          </BigCommand>
          <BigCommand>
            <WindowIcon />
            {"清理\n屏幕"}
          </BigCommand>
          <Separator />
          <BigCommand>
            <SwitchIcon />
            切换
            <Arrow />
          </BigCommand>
          <Column $width={31}>
            <Cmd icon={Grid2x2} arrow>平铺</Cmd>
            <Cmd icon={Columns2} arrow>拆分</Cmd>
            <Cmd icon={Layers}>层叠</Cmd>
          </Column>
          <Column>
            <Cmd icon={FilePlus2}>新建</Cmd>
            <Cmd icon={X} arrow>关闭</Cmd>
            <Cmd icon={Square}>排列</Cmd>
          </Column>
        </GroupBody>
        <GroupTitle>窗口</GroupTitle>
      </Group>
      <Group $width={50}>
        <GroupBody>
          <Column>
            <Cmd icon={Lock} arrow>锁定视图</Cmd>
            <Cmd icon={Lock} arrow>锁定图</Cmd>
            <Cmd icon={Lock} arrow>锁定动画</Cmd>
          </Column>
        </GroupBody>
        <GroupTitle>锁定</GroupTitle>
      </Group>
      <Group $width={201}>
        <GroupBody $gap={6}>
          <BigCommand $width={46}>
            <WheelIcon size={18} />
            全导航控制盘
            <Arrow />
          </BigCommand>
          <Separator />
          <Column $width={42}>
            <Cmd icon={MousePointer2}>选择</Cmd>
            <Cmd icon={Hand}>平移</Cmd>
            <Cmd icon={Search} arrow>全部缩放</Cmd>
          </Column>
          <Column $width={38}>
            <Cmd icon={Rotate3d}>动态观察</Cmd>
            <Cmd icon={Plus}>中心</Cmd>
            <Cmd icon={MoveHorizontal}>测量</Cmd>
          </Column>
          <Column>
            <Cmd icon={MoveHorizontal} arrow>上一视图</Cmd>
            <Cmd icon={House}>主页视图</Cmd>
            <Cmd icon={Camera}>查看面</Cmd>
          </Column>
        </GroupBody>
        <GroupTitle>浏览</GroupTitle>
      </Group>
      <Group $width={125}>
        <GroupBody>
          <Column>
            <Line>
              <RotateCcw size={9} />
              <FieldLabel htmlFor="angle">旋转角度:</FieldLabel>
              <SelectBox $width={54} $background="#e2e2e2">
                <PlainSelect id="angle">
                  <option>45 -35 -30</option>
                </PlainSelect>
                <Arrow $color="#333" />
              </SelectBox>
            </Line>
            <Line>
              <Camera size={9} />
              <FieldLabel htmlFor="view-name">视图名称:</FieldLabel>
              <SelectBox $width={54} $background="#e2e2e2">
                <PlainSelect id="view-name" />
                <Arrow $color="#333" />
              </SelectBox>
            </Line>
            <Line>
              <Cmd icon={Save}>保存</Cmd>
              <Cmd icon={Trash2}>删除</Cmd>
            </Line>
          </Column>
        </GroupBody>
        <GroupTitle>视角</GroupTitle>
      </Group>
      <RibbonEmpty />
    </Ribbon>
  );
}

function DockGripper() {
  return (
    <Gripper>
      <GripperBar />
      <CloseButton aria-label="关闭">
        <X size={5} strokeWidth={4} />
      </CloseButton>
    </Gripper>
  );
}

function SidePanel() {
  return (
    <Dock>
      <DockGripper />
      <DockTabs>
        <DockTab $active>任务</DockTab>
        <DockTab>工具</DockTab>
        <DockTab>共享视图</DockTab>
      </DockTabs>
      <TreeBox>
        <TreeList $height={26}>
          <TreeRow>
            <LineIcon color="#3a78b0" d="M1 1 H8 V4 M1 4 L6 7" />
            工程 '33'
          </TreeRow>
          <TreeRow $indent={10}>
            <StudyIcon />
            a072v617_asm(1)_study
            <Spacer />
            <MeshBadge />
          </TreeRow>
          <TreeRow $indent={10} $selected>
            <StudyIcon />
            42k2003_方案
            <Spacer />
            <MeshBadge />
          </TreeRow>
        </TreeList>
      </TreeBox>
      <TaskBox>
        <TreeList $height={104}>
          <TreeRow $selected>
            <StudyIcon />
            方案任务 : 42k2003_方案
          </TreeRow>
          {tasks.map((task) => (
            <TreeRow key={task.label} $indent={task.indent} $muted={task.muted}>
              {!task.indent && <Tick>{task.tick ? "✓" : ""}</Tick>}
              {task.icon}
              {task.label}
              <Spacer />
              {task.badge}
            </TreeRow>
          ))}
          <TreeRow $indent={1}>
            <Square size={7} color="#888" />
            日志*
          </TreeRow>
        </TreeList>
      </TaskBox>
      <DockGripper />
      <LayerTools>
        <LayerTool aria-label="新建层" $color="#3a78c8"><FilePlus2 size={8} /></LayerTool>
        <LayerTool aria-label="打开"><FolderIcon /></LayerTool>
        <LayerTool aria-label="分配"><Layers size={8} /></LayerTool>
        <LayerTool aria-label="编辑"><Pencil size={8} /></LayerTool>
        <LayerTool aria-label="清除"><Trash2 size={8} /></LayerTool>
        <LayerTool aria-label="展开" $color="#3a68b8"><Columns2 size={8} /></LayerTool>
        <LayerTool aria-label="折叠"><Square size={7} /></LayerTool>
        <LayerTool aria-label="设置"><Wrench size={8} /></LayerTool>
        <LayerTool aria-label="删除" $color="#c02828"><X size={8} /></LayerTool>
      </LayerTools>
      <LayerBox>
        <LayerList $height={78}>
          <TreeRow>
            <LineIcon color="#333" d="M2 3 L4.5 5.5 L7 3" />
            <LayerLabel>
              <Check type="checkbox" defaultChecked />
              <FolderIcon />
              CAD 几何
            </LayerLabel>
          </TreeRow>
          {[1, 2, 3, 4, 5, 6, 7, 8].map((n) => (
            <TreeRow key={n} $indent={21}>
              <LayerLabel>
                <Check type="checkbox" defaultChecked />
                <LayerIcon />
                42k2003 {n}
              </LayerLabel>
            </TreeRow>
          ))}
        </LayerList>
        <Scroll>
          <LineIcon color="#333" d="M2 5 L4.5 2.5 L7 5" />
          <Spacer />
          <Thumb $width={8} $height={20} />
          <Spacer />
          <Spacer />
          <Spacer />
          <Spacer />
          <LineIcon color="#333" d="M2 3 L4.5 5.5 L7 3" />
        </Scroll>
      </LayerBox>
    </Dock>
  );
}

function NavigationBar() {
  return (
    <NavBar>
      <NavDot />
      <NavWheel aria-label="全导航控制盘">
        <WheelIcon size={14} />
        <Arrow />
      </NavWheel>
      <NavButton aria-label="选择"><MousePointer2 size={9} /></NavButton>
      <NavButton aria-label="动态观察"><Rotate3d size={10} /></NavButton>
      <NavButton aria-label="平移" $active><Hand size={10} /></NavButton>
      <NavButton aria-label="缩放"><ZoomIn size={9} /></NavButton>
      <NavButton aria-label="窗口缩放" $color="#777"><Search size={10} /></NavButton>
      <NavButton aria-label="全部缩放" $color="#777"><Search size={10} /></NavButton>
      <NavButton aria-label="中心" $color="#6f8fa8"><Plus size={11} /></NavButton>
      <NavButton aria-label="测量"><LineIcon color="#c8a050" d="M0 2 H9 M0 5 H9 M0 6 H9" /></NavButton>
      <NavButton aria-label="查看面"><Camera size={10} /></NavButton>
      <Spacer />
      <NavDot />
    </NavBar>
  );
}

function AboutDialog() {
  return (
    <Dialog role="dialog" aria-label="关于">
      <DialogBar>
        <DialogTitle>关于</DialogTitle>
        <ToolButton aria-label="关闭"><X size={10} strokeWidth={2} /></ToolButton>
      </DialogBar>
      <DialogBody>
        <Fieldset $height={73}>
          <Legend>安装信息</Legend>
          <ProductLogo>
            M<ProductTag>SYN</ProductTag>
          </ProductLogo>
          <InfoBox $height={52}>
            <InfoTop>
              <VersionRows>
                {versions.map(([name, value, wide]) => (
                  <VersionRow key={name}>
                    <VersionName $wide={wide}>{name}</VersionName>
                    <VersionValue>- {value}</VersionValue>
                  </VersionRow>
                ))}
              </VersionRows>
              <Scroll>
                <LineIcon color="#333" d="M2 5 L4.5 2.5 L7 5" />
                <Thumb $width={7} $height={9} />
                <Spacer />
                <LineIcon color="#333" d="M2 3 L4.5 5.5 L7 3" />
              </Scroll>
            </InfoTop>
            <Scroll $horizontal>
              <LineIcon color="#333" d="M6 2 L3.5 4 L6 6" />
              <Thumb $width={138} $height={7} />
              <Spacer />
              <LineIcon color="#333" d="M3 2 L5.5 4 L3 6" />
              <LineIcon />
            </Scroll>
          </InfoBox>
        </Fieldset>
        <Fieldset $height={72}>
          <Legend>版权和第三方许可</Legend>
          <InfoBox $height={56}>
            <InfoTop>
              <LicenseText>{license}</LicenseText>
              <Scroll>
                <LineIcon color="#333" d="M2 5 L4.5 2.5 L7 5" />
                <Thumb $width={7} $height={9} />
                <Spacer />
                <LineIcon color="#333" d="M2 3 L4.5 5.5 L7 3" />
              </Scroll>
            </InfoTop>
          </InfoBox>
        </Fieldset>
        <DialogButtons>
          <DialogButton $width={56} $primary>确定</DialogButton>
          <DialogButton $width={86}>许可信息...</DialogButton>
        </DialogButtons>
      </DialogBody>
    </Dialog>
  );
}

export default function App() {
  return (
    <>
      <GlobalStyle />
      <Window>
        <TopBar />
        <RibbonBar />
        <Main>
          <SidePanel />
          <Work>
            <Viewport>
              <ModelPlace>
                <Model />
              </ModelPlace>
              <MdiButtons>
                <ToolButton aria-label="最小化">–</ToolButton>
                <ToolButton aria-label="还原"><Copy size={8} strokeWidth={3} /></ToolButton>
                <ToolButton aria-label="关闭"><X size={8} strokeWidth={4} /></ToolButton>
              </MdiButtons>
              <CubePlace>
                <ViewCube />
              </CubePlace>
              <NavigationBar />
              <Brand>
                AUTODESK
                <BrandName>MOLDFLOW INSIGHT</BrandName>
              </Brand>
              <RulerPlace>
                <RulerBar>
                  {[1, 2, 3, 4, 5, 6, 7, 8, 9].map((n) => (
                    <RulerStep key={n} />
                  ))}
                </RulerBar>
                缩放 (900 mm)
              </RulerPlace>
              <AxesPlace>
                <Axes />
              </AxesPlace>
              <Angles>
                <div>45</div>
                <div>-35</div>
                <div>-30</div>
              </Angles>
              <AboutDialog />
            </Viewport>
            <DocTabs>
              <DocTab>
                <StudyIcon />
                42k2003_方案
                <X size={10} strokeWidth={3} />
              </DocTab>
            </DocTabs>
          </Work>
        </Main>
        <StatusBar>
          <span>就绪</span>
          <StatusRight>
            <Copy size={8} />
            日志
            <StatusMode>热塑性注塑成型</StatusMode>
          </StatusRight>
        </StatusBar>
      </Window>
    </>
  );
}
